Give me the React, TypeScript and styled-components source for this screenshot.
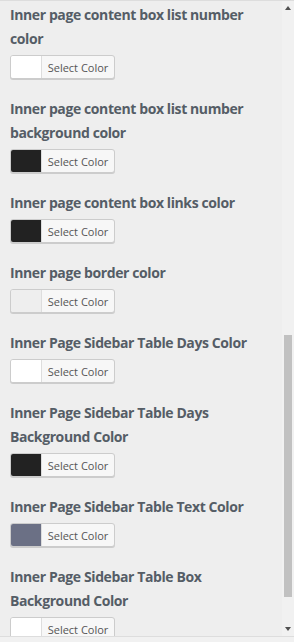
import styled, { createGlobalStyle } from 'styled-components';

interface ColorSetting {
  label: string;
  color: string;
}

const settings: ColorSetting[] = [
  { label: 'Inner page content box list number color', color: '#ffffff' },
  { label: 'Inner page content box list number background color', color: '#222222' },
  { label: 'Inner page content box links color', color: '#222222' },
  { label: 'Inner page border color', color: '#eeeeee' },
  { label: 'Inner Page Sidebar Table Days Color', color: '#ffffff' },
  { label: 'Inner Page Sidebar Table Days Background Color', color: '#222222' },
  { label: 'Inner Page Sidebar Table Text Color', color: '#6b7085' },
  { label: 'Inner Page Sidebar Table Box Background Color', color: '#ffffff' },
];

const GlobalStyle = createGlobalStyle`
  body {
    margin: 0;
    background: #eeeeee;
    font-family: 'Open Sans', 'Noto Sans', sans-serif;
  }
`;

const Frame = styled.div`
  width: 294px;
  height: 642px;
  display: flex;
  flex-direction: column;
  background: #f1f1f1;
`;

const Viewport = styled.div`
  height: 635px;
  display: flex;
  border-top: 1px solid #dddddd;
  border-bottom: 1px solid #dddddd;
  background: #eeeeee;
`;

const Content = styled.div`
  flex: 1;
  overflow: hidden;
  padding: 2px 12px 0 10px;
`;

const Setting = styled.div`
  margin-bottom: 18px;
`;

const Title = styled.div`
  font-size: 14px;
  font-weight: 700;
  letter-spacing: -0.4px;
  line-height: 24px;
  color: #555d66;
  margin-bottom: 4px;
`;

const PickerButton = styled.button`
  display: flex;
  align-items: stretch;
  height: 24px;
  width: 105px;
  padding: 0;
  border: 1px solid #cccccc;
  border-radius: 3px;
  box-shadow: 0 1px 0 #cccccc;
  background: #f7f7f7;
  overflow: hidden;
  cursor: pointer;
`;

const Swatch = styled.span<{ $color: string }>`
  width: 30px;
  background: ${(p) => p.$color};
  border-right: 1px solid #dddddd;
`;

const PickerLabel = styled.span`
  flex: 1;
  display: flex;
  align-items: center;
  justify-content: center;
  font-family: 'Open Sans', 'Noto Sans', sans-serif;
  font-size: 11px;
  color: #555555;
`;

const Scrollbar = styled.div`
  width: 12px;
  display: flex;
  flex-direction: column;
  background: #f1f1f1;
`;

const Arrow = styled.div<{ $down?: boolean }>`
  height: 14px;
  display: flex;
  align-items: center;
  justify-content: center;
  &::before {
    content: '';
    border-left: 3.5px solid transparent;
    border-right: 3.5px solid transparent;
    ${(p) =>
      p.$down
        ? 'border-top: 4px solid #505050;'
        : 'border-bottom: 4px solid #505050;'}
  }
`;

const Track = styled.div`
  flex: 1;
  display: flex;
  flex-direction: column;
  padding: 0 2px 0 2px;
`;

const Thumb = styled.div`
  background: #c1c1c1;
`;

export default function App() {
  const thumbTop = 320;
  const thumbHeight = 262;

  return (
    <>
      <GlobalStyle />
      <Frame>
        <Viewport>
          <Content>
            {settings.map((s) => (
              <Setting key={s.label}>
                <Title>{s.label}</Title>
                <PickerButton type='button'>
                  <Swatch $color={s.color} />
                  <PickerLabel>Select Color</PickerLabel>
                </PickerButton>
              </Setting>
            ))}
          </Content>
          <Scrollbar>
            <Arrow />
            <Track>
              <Thumb style={{ marginTop: thumbTop, height: thumbHeight }} />
            </Track>
            <Arrow $down />
          </Scrollbar>
        </Viewport>
      </Frame>
    </>
  );
}
